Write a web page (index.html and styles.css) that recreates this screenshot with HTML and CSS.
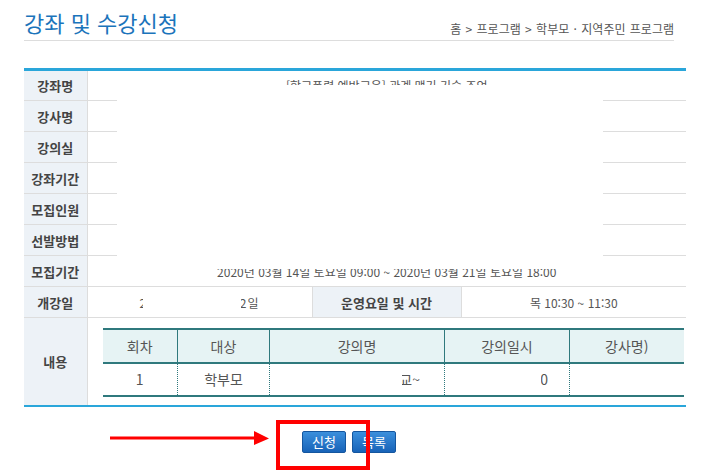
FILE: index.html
```html
<!DOCTYPE html>
<html lang="ko">
<head>
    <meta charset="UTF-8">
    <title>강좌 및 수강신청</title>
    <link rel="stylesheet" href="styles.css">
</head>
<body>
    <div class="wrap">
        <div class="page-head">
            <h2 class="page-title">강좌 및 수강신청</h2>
            <div class="location">홈 &gt; 프로그램 &gt; 학부모 · 지역주민 프로그램</div>
        </div>

        <table class="view-table">
            <colgroup>
                <col class="col-th">
                <col class="col-td">
                <col class="col-th2">
                <col class="col-td">
            </colgroup>
            <tr>
                <th>강좌명</th>
                <td colspan="3">[학교폭력 예방교육] 관계 맺기 기술 조언</td>
            </tr>
            <tr>
                <th>강사명</th>
                <td colspan="3">학교폭력 예방 전문강사 (가족상담센터) / 교육청 연계 학부모 · 지역주민 프로그램</td>
            </tr>
            <tr>
                <th>강의실</th>
                <td colspan="3">본관 2층 시청각실</td>
            </tr>
            <tr>
                <th>강좌기간</th>
                <td colspan="3">2020년 03월 26일 ~ 2020년 03월 26일</td>
            </tr>
            <tr>
                <th>모집인원</th>
                <td colspan="3">30명</td>
            </tr>
            <tr>
                <th>선발방법</th>
                <td colspan="3">선착순</td>
            </tr>
            <tr>
                <th>모집기간</th>
                <td colspan="3">2020년 03월 14일 토요일 09:00 ~ 2020년 03월 21일 토요일 18:00</td>
            </tr>
            <tr>
                <th>개강일</th>
                <td class="open-date">2020년 03월 12일</td>
                <th>운영요일 및 시간</th>
                <td>목 10:30 ~ 11:30</td>
            </tr>
            <tr>
                <th>내용</th>
                <td colspan="3" class="cont">
                    <table class="lecture-table">
                        <colgroup>
                            <col class="w-no">
                            <col class="w-target">
                            <col class="w-name">
                            <col class="w-date">
                            <col class="w-teacher">
                        </colgroup>
                        <tr>
                            <th>회차</th>
                            <th>대상</th>
                            <th>강의명</th>
                            <th>강의일시</th>
                            <th>강사명)</th>
                        </tr>
                        <tr>
                            <td>1</td>
                            <td>학부모</td>
                            <td class="t-name">우리 아이 지키는 교~</td>
                            <td class="t-date">03.26 10:30</td>
                            <td></td>
                        </tr>
                    </table>
                </td>
            </tr>
        </table>

        <div class="btn-area">
            <a class="btn">신청</a>
            <a class="btn">목록</a>
        </div>
    </div>

    <!-- 가림 처리 -->
    <div class="mask mask-main"></div>
    <div class="mask mask-date"></div>
    <div class="mask mask-name"></div>
    <div class="mask mask-time"></div>

    <!-- 안내 표시 -->
    <div class="mark-box"></div>
    <svg class="mark-arrow" width="162" height="18" viewBox="0 0 162 18">
        <line x1="0" y1="9" x2="148" y2="9" stroke="#f00" stroke-width="3"/>
        <polygon points="144,2 159,9.5 144,16" fill="#f00"/>
    </svg>
</body>
</html>
```

FILE: styles.css
```css
* {
    box-sizing: border-box;
    margin: 0;
    padding: 0;
}

body {
    position: relative;
    width: 706px;
    height: 474px;
    overflow: hidden;
    background: #fff;
    color: #555;
    font-family: "Noto Sans CJK KR", "Noto Sans", sans-serif;
    font-size: 12px;
}

.wrap {
    padding-left: 24px;
}

.page-head {
    display: flex;
    justify-content: space-between;
    align-items: flex-end;
    width: 650px;
    height: 41px;
    border-bottom: 1px solid #ddd;
}

.page-title {
    font-size: 22px;
    font-weight: normal;
    color: #1b74bb;
    line-height: 24px;
    padding-bottom: 6px;
}

.location {
    font-size: 12px;
    color: #555;
    line-height: 14px;
    padding-bottom: 4px;
    word-spacing: 1px;
}

/* 상세 테이블 */
.view-table {
    width: 662px;
    margin-top: 27px;
    border-collapse: collapse;
    table-layout: fixed;
    border-top: 3px solid #2aa6da;
    border-bottom: 2px solid #2aa6da;
}

.col-th { width: 63px; }
.col-td { width: 225px; }
.col-th2 { width: 149px; }

.view-table > tbody > tr > th,
.view-table > tbody > tr > td {
    height: 31px;
    border-bottom: 1px solid #ddd;
    text-align: center;
    vertical-align: middle;
    font-size: 12px;
    white-space: nowrap;
}

.view-table > tbody > tr > th {
    background: #edf2f7;
    color: #444;
    font-size: 13px;
    font-weight: bold;
    border-right: 1px solid #ddd;
    border-left: 1px solid #ddd;
}

.view-table > tbody > tr > th:first-child {
    border-left: none;
}

.view-table > tbody > tr > td.open-date {
    letter-spacing: 1px;
    word-spacing: 7px;
}

.view-table > tbody > tr > td.cont {
    height: 88px;
    padding: 9px 0 7px 15px;
    text-align: left;
}

/* 강의 목록 */
.lecture-table {
    width: 581px;
    border-collapse: collapse;
    table-layout: fixed;
    border-top: 2px solid #2f797d;
    border-bottom: 2px solid #2f797d;
}

.w-no { width: 75px; }
.w-target { width: 92px; }
.w-name { width: 175px; }
.w-date { width: 125px; }
.w-teacher { width: 114px; }

.lecture-table th,
.lecture-table td {
    text-align: center;
    font-size: 14px;
    color: #555;
    white-space: nowrap;
    overflow: hidden;
}

.lecture-table th {
    height: 34px;
    background: #e6f3f4;
    font-weight: normal;
    border-bottom: 2px solid #2f797d;
    border-left: 1px solid #2f797d;
}

.lecture-table td {
    height: 33px;
    border-left: 1px dotted #2f797d;
}

.lecture-table th:first-child,
.lecture-table td:first-child {
    border-left: none;
}

.lecture-table .t-name {
    text-align: right;
    padding-right: 24px;
}

.lecture-table .t-date {
    padding-left: 8px;
}

/* 버튼 */
.btn-area {
    display: flex;
    justify-content: center;
    gap: 6px;
    width: 650px;
    margin-top: 24px;
}

.btn {
    display: inline-block;
    width: 44px;
    height: 22px;
    line-height: 20px;
    text-align: center;
    font-size: 13px;
    color: #fff;
    border: 1px solid #14569f;
    border-radius: 2px;
    background: linear-gradient(#3b8fdc, #1863b8);
    cursor: pointer;
}

/* 가림 처리 영역 */
.mask {
    position: absolute;
    background: #fff;
}

.mask-main {
    left: 117px;
    top: 85px;
    width: 486px;
    height: 184px;
}

.mask-date {
    left: 143px;
    top: 289px;
    width: 98px;
    height: 28px;
}

.mask-name {
    left: 296px;
    top: 367px;
    width: 106px;
    height: 28px;
}

.mask-time {
    left: 469px;
    top: 367px;
    width: 72px;
    height: 28px;
}

/* 안내 표시 */
.mark-box {
    position: absolute;
    left: 276px;
    top: 420px;
    width: 94px;
    height: 50px;
    border: 4px solid #f00;
}

.mark-arrow {
    position: absolute;
    left: 110px;
    top: 429px;
}
```
